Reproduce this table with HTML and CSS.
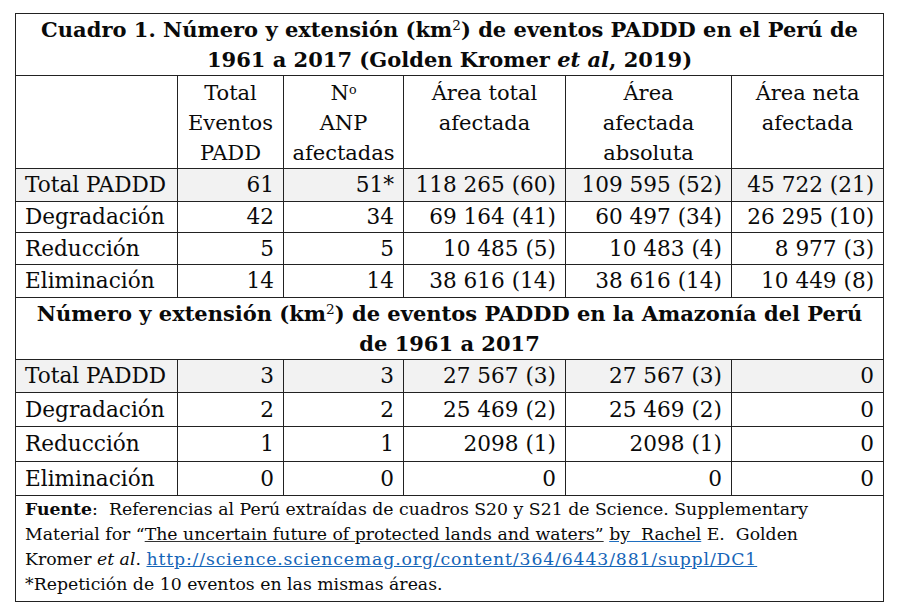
FILE: index.html
```html
<!DOCTYPE html>
<html lang="es">
<head>
<meta charset="utf-8">
<link rel="stylesheet" href="styles.css">
</head>
<body>
<div class="page">
<table class="cuadro">
  <colgroup>
    <col class="c1"><col class="c2"><col class="c3"><col class="c4"><col class="c5"><col class="c6">
  </colgroup>
  <tr class="title-row">
    <td colspan="6" class="title">Cuadro 1. Número y extensión (km<sup>2</sup>) de eventos PADDD en el Perú de<br>1961 a 2017 (Golden Kromer <i>et al</i>, 2019)</td>
  </tr>
  <tr class="head-row">
    <td></td>
    <td class="head">Total<br>Eventos<br>PADD</td>
    <td class="head">N<sup class="ord">o</sup><br>ANP<br>afectadas</td>
    <td class="head">Área total<br>afectada</td>
    <td class="head">Área<br>afectada<br>absoluta</td>
    <td class="head">Área neta<br>afectada</td>
  </tr>
  <tr class="row total r1">
    <td class="lbl">Total PADDD</td><td class="num">61</td><td class="num">51*</td><td class="num">118 265 (60)</td><td class="num">109 595 (52)</td><td class="num">45 722 (21)</td>
  </tr>
  <tr class="row r2">
    <td class="lbl">Degradación</td><td class="num">42</td><td class="num">34</td><td class="num">69 164 (41)</td><td class="num">60 497 (34)</td><td class="num">26 295 (10)</td>
  </tr>
  <tr class="row r3">
    <td class="lbl">Reducción</td><td class="num">5</td><td class="num">5</td><td class="num">10 485 (5)</td><td class="num">10 483 (4)</td><td class="num">8 977 (3)</td>
  </tr>
  <tr class="row r4">
    <td class="lbl">Eliminación</td><td class="num">14</td><td class="num">14</td><td class="num">38 616 (14)</td><td class="num">38 616 (14)</td><td class="num">10 449 (8)</td>
  </tr>
  <tr class="title-row">
    <td colspan="6" class="title">Número y extensión (km<sup>2</sup>) de eventos PADDD en la Amazonía del Perú<br>de 1961 a 2017</td>
  </tr>
  <tr class="row total r5">
    <td class="lbl">Total PADDD</td><td class="num">3</td><td class="num">3</td><td class="num">27 567 (3)</td><td class="num">27 567 (3)</td><td class="num">0</td>
  </tr>
  <tr class="row r6">
    <td class="lbl">Degradación</td><td class="num">2</td><td class="num">2</td><td class="num">25 469 (2)</td><td class="num">25 469 (2)</td><td class="num">0</td>
  </tr>
  <tr class="row r7">
    <td class="lbl">Reducción</td><td class="num">1</td><td class="num">1</td><td class="num">2098 (1)</td><td class="num">2098 (1)</td><td class="num">0</td>
  </tr>
  <tr class="row r8">
    <td class="lbl">Eliminación</td><td class="num">0</td><td class="num">0</td><td class="num">0</td><td class="num">0</td><td class="num">0</td>
  </tr>
  <tr class="foot-row">
    <td colspan="6" class="foot"><b>Fuente</b>:&nbsp; Referencias al Perú extraídas de cuadros S20 y S21 de Science. Supplementary<br>Material for “<span class="ul">The uncertain future of protected lands and waters”</span> <span class="ul blue-ul">by&nbsp; Rachel</span> E.&nbsp; Golden<br>Kromer <i>et al</i>. <a class="link" href="#">http://science.sciencemag.org/content/364/6443/881/suppl/DC1</a><br>*Repetición de 10 eventos en las mismas áreas.</td>
  </tr>
</table>
</div>
</body>
</html>
```

FILE: styles.css
```css
* { box-sizing: border-box; }
html, body { margin: 0; padding: 0; background: #ffffff; }
.page { padding: 13px 0 0 15px; width: 900px; height: 614px; }
.cuadro {
  border-collapse: collapse;
  table-layout: fixed;
  width: 868px;
  font-family: "DejaVu Serif", "Liberation Serif", serif;
  font-size: 21.6px;
  color: #0a0a0a;
  border: 1.5px solid #333;
}
.c1 { width: 162px; }
.c2 { width: 106px; }
.c3 { width: 120px; }
.c4 { width: 162px; }
.c5 { width: 166px; }
.c6 { width: 152px; }
.cuadro td { border: 1px solid #222; padding: 0 9px; white-space: nowrap; }
.title { text-align: center; font-weight: bold; font-size: 21px; line-height: 30px; height: 62px; padding: 0 !important; }
.title i { font-style: italic; }
.title sup { font-size: 0.65em; vertical-align: 0.5em; line-height: 0; font-weight: normal; }
.head-row td { height: 93px; vertical-align: top; }
.head { text-align: center; font-size: 21px; line-height: 30px; padding: 2px 0 0 0 !important; }
.head .ord { font-size: 0.6em; vertical-align: 0.5em; line-height: 0; }
.row td { line-height: 28px; }
.r1 td, .r4 td, .r5 td { height: 33px; }
.r2 td { height: 31px; }
.r3 td { height: 32px; }
.r6 td, .r8 td { height: 34px; }
.r7 td { height: 35px; }
.total td { background: #f2f2f2; }
.lbl { text-align: left; }
.num { text-align: right; }
.foot-row td { height: 106px; }
.foot { font-size: 17.3px; line-height: 25px; vertical-align: top; padding: 1px 9px 0 9px !important; }
.ul { text-decoration: underline; text-decoration-color: #333; }
.blue-ul { text-decoration-color: #1f6fc0; }
.link { color: #1565b8; text-decoration: underline; letter-spacing: 0.85px; }
```
